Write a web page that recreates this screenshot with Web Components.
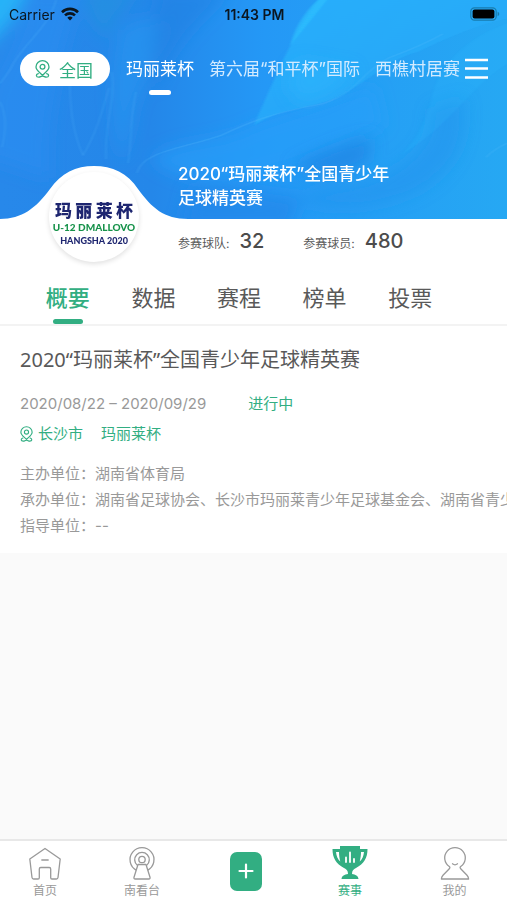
<!doctype html>
<html lang="zh-CN">
  <head>
    <meta charset="UTF-8" />
    <meta name="viewport" content="width=device-width, initial-scale=1" />
    <title>赛事</title>
    <style>
      :root {
        --green: #32ae82;
        --dark: #595959;
        --gray: #999;
      }
      body {
        margin: 0;
        min-height: 100vh;
        display: flex;
        flex-direction: column;
        background: #fafafa;
        color: var(--dark);
        font-family: Inter, "Noto Sans CJK SC", sans-serif;
        overflow-x: hidden;
      }
      tab-bar {
        margin-top: auto;
      }
    </style>
  </head>
  <body>
    <event-hero>
      <status-bar></status-bar>
      <event-switcher>
        <event-link active>玛丽莱杯</event-link>
        <event-link>第六届“和平杯”国际</event-link>
        <event-link>西樵村居赛</event-link>
      </event-switcher>
      <span slot="title">2020“玛丽莱杯”全国青少年足球精英赛</span>
      <hero-stat slot="stats" value="32">参赛球队:</hero-stat>
      <hero-stat slot="stats" value="480">参赛球员:</hero-stat>
    </event-hero>
    <section-tabs>
      <section-tab active>概要</section-tab>
      <section-tab>数据</section-tab>
      <section-tab>赛程</section-tab>
      <section-tab>榜单</section-tab>
      <section-tab>投票</section-tab>
    </section-tabs>
    <event-summary>
      <span slot="title">2020“玛丽莱杯”全国青少年足球精英赛</span>
      <span slot="date">2020/08/22 – 2020/09/29</span>
      <span slot="state">进行中</span>
      <span slot="city">长沙市</span>
      <span slot="cup">玛丽莱杯</span>
      <org-row label="主办单位：">湖南省体育局</org-row>
      <org-row label="承办单位：">湖南省足球协会、长沙市玛丽莱青少年足球基金会、湖南省青少年</org-row>
      <org-row label="指导单位：">--</org-row>
    </event-summary>
    <tab-bar>
      <tab-item icon="home">首页</tab-item>
      <tab-item icon="stand">南看台</tab-item>
      <add-button></add-button>
      <tab-item icon="cup" active>赛事</tab-item>
      <tab-item icon="me">我的</tab-item>
    </tab-bar>

    <script>
      // シャドウルートを作る共通クラス
      class BaseElement extends HTMLElement {
        constructor() {
          super();
          this.attachShadow({ mode: "open" }).innerHTML = this.render();
        }
      }

      const pinIcon = (width, height) => `
        <svg width="${width}" height="${height}" viewBox="0 0 15 18" fill="none" stroke="currentColor" stroke-width="1.3" stroke-linecap="round" aria-hidden="true">
          <path d="M7.5 15.2C4.7 12.4 1 10.2 1 7a6.5 6.3 0 0 1 13 0c0 3.2-3.7 5.4-6.5 8.2z"/>
          <circle cx="7.5" cy="6.8" r="2.4"/>
          <path d="M3.3 13.7c-2.8.9-2.4 3.5.4 3.5 1.9 0 1.9-1 3.8-1s1.9 1 3.8 1c2.8 0 3.2-2.6.4-3.5"/>
        </svg>`;

      class StatusBar extends BaseElement {
        render() {
          return `
            <style>
              :host {
                display: grid;
                grid-template-columns: 1fr auto 1fr;
                align-items: center;
                height: 28px;
                padding: 0 7px 0 9px;
                color: #0b1620;
                font-size: 14px;
              }
              .carrier { display: flex; align-items: center; gap: 6px; }
              .time { font-weight: 600; }
              .battery { justify-self: end; }
              svg { display: block; }
            </style>
            <span class="carrier">Carrier
              <svg width="18" height="14" viewBox="0 0 18 14" fill="none" stroke="currentColor" stroke-width="2.6" aria-hidden="true">
                <path d="M1 5.2a11.4 11.4 0 0 1 16 0"/>
                <path d="M4 8.4a7.2 7.2 0 0 1 10 0"/>
                <path d="M9 13.4 6.3 10.7a3.9 3.9 0 0 1 5.4 0z" fill="currentColor" stroke="none"/>
              </svg>
            </span>
            <span class="time">11:43 PM</span>
            <svg class="battery" width="30" height="14" viewBox="0 0 30 14" aria-hidden="true">
              <rect x=".8" y=".8" width="25.4" height="12.4" rx="3.6" fill="none" stroke="#187cae" stroke-width="1.2"/>
              <rect x="2.6" y="2.5" width="21.8" height="9" rx="2" fill="#000"/>
              <path d="M27.6 4.8c2.2.7 2.2 3.7 0 4.4z" fill="#187cae"/>
            </svg>`;
        }
      }

      class EventLink extends BaseElement {
        render() {
          return `
            <style>
              :host { display: block; flex: none; position: relative; }
              a { color: #d3ebff; font-size: 17px; line-height: 34px; text-decoration: none; white-space: nowrap; }
              :host([active]) a { color: #fff; }
              :host([active])::after {
                content: "";
                position: absolute;
                left: calc(50% - 11px);
                top: 38px;
                width: 22px;
                height: 5px;
                border-radius: 3px;
                background: #fff;
              }
            </style>
            <a href="#"><slot></slot></a>`;
        }
      }

      class EventSwitcher extends BaseElement {
        render() {
          return `
            <style>
              :host { display: flex; align-items: center; padding: 24px 19px 0 20px; }
              button { border: 0; padding: 0; font: inherit; cursor: pointer; }
              .area {
                flex: none;
                display: flex;
                align-items: center;
                gap: 9px;
                height: 34px;
                padding: 0 17px 0 15px;
                border-radius: 17px;
                background: #fff;
                color: var(--green);
                font-size: 17px;
              }
              nav {
                flex: 1;
                min-width: 0;
                display: flex;
                gap: 15px;
                height: 44px;
                margin: 0 4px -10px 16px;
                overflow: hidden;
              }
              .menu { flex: none; background: none; color: #fff; }
              svg { display: block; }
            </style>
            <button class="area">${pinIcon(15, 18)}全国</button>
            <nav><slot></slot></nav>
            <button class="menu" aria-label="菜单">
              <svg width="23" height="22" viewBox="0 0 23 22" stroke="currentColor" stroke-width="2.6">
                <path d="M0 2h23M0 10.5h23M0 19.5h23"/>
              </svg>
            </button>`;
        }
      }

      class HeroStat extends BaseElement {
        render() {
          return `
            <style>
              :host { display: flex; align-items: baseline; gap: 10px; font-size: 12px; line-height: 28px; }
              b { font-size: 20px; font-weight: 500; color: #4c4c4c; }
            </style>
            <span><slot></slot></span><b>${this.getAttribute("value")}</b>`;
        }
      }

      class CupLogo extends BaseElement {
        render() {
          return `
            <style>
              :host {
                display: flex;
                flex-direction: column;
                align-items: center;
                box-sizing: border-box;
                width: 90px;
                height: 90px;
                padding-top: 30px;
                border-radius: 50%;
                background: #fff;
                box-shadow: 0 2px 5px #0000001f;
                color: #1e2670;
                white-space: nowrap;
                font-weight: 900;
              }
              .name { font-size: 17px; line-height: 18px; }
              .team { font: 900 10px/14px Lato, sans-serif; color: #16924a; }
              .city { font: 900 9px/13px Lato, sans-serif; }
            </style>
            <span class="name">玛 丽 莱 杯</span>
            <span class="team">U-12 DMALLOVO</span>
            <span class="city">HANGSHA 2020</span>`;
        }
      }

      class EventHero extends BaseElement {
        render() {
          return `
            <style>
              :host { display: block; background: #fff; }
              .cover { position: relative; isolation: isolate; }
              /* 背景の模様 */
              .art { position: absolute; inset: 0; width: 100%; height: 100%; z-index: -1; }
              .bump { position: absolute; left: 0; bottom: -1px; z-index: -1; }
              cup-logo { position: absolute; left: 49px; bottom: -43px; }
              h1 {
                margin: 76px 0 0 178px;
                max-width: 222px;
                padding-bottom: 9px;
                color: #fff;
                font-size: 17px;
                font-weight: 500;
                line-height: 24px;
              }
              .stats { display: flex; gap: 39px; height: 26px; padding: 8px 0 10px 178px; }
            </style>
            <div class="cover">
              <svg class="art" viewBox="0 0 507 220" preserveAspectRatio="none" aria-hidden="true">
                <defs>
                  <linearGradient id="base" x1="0" y1="0" x2="1" y2="0">
                    <stop offset="0" stop-color="#2788ea"/>
                    <stop offset=".3" stop-color="#2487e9"/>
                    <stop offset=".52" stop-color="#2498f6"/>
                    <stop offset="1" stop-color="#26a8f3"/>
                  </linearGradient>
                  <linearGradient id="petal" x1="0" y1="0" x2="1" y2="1">
                    <stop offset="0" stop-color="#2ab6fe"/>
                    <stop offset="1" stop-color="#25a3f5"/>
                  </linearGradient>
                  <filter id="soft" x="-20%" y="-20%" width="140%" height="140%"><feGaussianBlur stdDeviation="8"/></filter>
                  <filter id="edge" x="-10%" y="-10%" width="120%" height="120%"><feGaussianBlur stdDeviation=".8"/></filter>
                </defs>
                <rect width="507" height="220" fill="url(#base)"/>
                <g filter="url(#soft)">
                  <path d="M-20-20h50C24 8 10 26-20 54z" fill="#28b2f8"/>
                  <path d="M28-10C22 40-4 70-10 100v60l60 20C44 120 60 60 82-10z" fill="#2990f4" opacity=".5"/>
                  <path d="M84-10h60c-20 16-32 26-36 50-12-10-22-28-24-50z" fill="#2495dc" opacity=".5"/>
                  <path d="M120 30c20-16 48-14 48 2-8 28-30 50-36 92l-10 40c-12-40-12-96-2-134z" fill="#2996f2" opacity=".6"/>
                  <path d="M160-10h70c-26 30-56 50-74 100-6-36-4-66 4-100z" fill="#2180e2" opacity=".55"/>
                  <path d="M150 160c30-22 70-14 104-34l120-40 10 40-90 40-60 16c-30 2-60-4-84-22z" fill="#249efa" opacity=".6"/>
                </g>
                <g filter="url(#edge)">
                  <path d="M322-4C300 20 280 66 254 126c30-20 62-16 90-32 32-18 44-34 74-42 34-16 60-28 93-34V-4z" fill="url(#petal)" opacity=".75"/>
                  <path d="M322-4c-12 10-26 26-32 50 14-18 28-34 40-50z" fill="#2dc4ff" opacity=".55"/>
                </g>
                <g filter="url(#soft)">
                  <path d="M372 138c-30 6-60 18-80 30 20 10 50 10 76-6z" fill="#1e7fe0" opacity=".6"/>
                  <path d="M430 110c4 34-22 58-56 70-28 10-60 8-80 20 30 16 100 12 140-18 26-22 34-44 30-84z" fill="#2391ec" opacity=".45"/>
                  <path d="M190 190c40-6 70 6 110 8l-10 32H180z" fill="#2286e8" opacity=".7"/>
                  <path d="M300 60c-20 20-14 36 4 44 20-4 40-14 52-34z" fill="#2cbcff" opacity=".4"/>
                </g>
                <path d="M511 22C474 34 440 60 432 96c-6 24-14 44-32 60 48-26 74-74 111-94z" fill="#2fbcff" opacity=".18" filter="url(#edge)"/>
                <g fill="none" stroke="#62c2ff" stroke-width="1.2" opacity=".28" filter="url(#edge)">
                  <path d="M137 174c4-22 50-26 84-38 30-14 50-22 102-32 34-10 38-32 66-46 22-8 40-16 54-24"/>
                  <path d="M56 0C48 30 20 46 10 70L0 84M70 84c0 30 4 52 13 72 12-20 18-40 26-68M112 72c4 30-8 50-6 88M136 92c-6 24-4 50-8 72"/>
                  <path d="M0 102c7 14 6 28 2 46M486 158c6-6 12-10 21-14"/>
                </g>
              </svg>
              <svg class="bump" width="190" height="55" viewBox="0 0 190 55" fill="#fff" aria-hidden="true">
                <path d="M0 54C22 54 36 43 50 24 61 8 76 1 94 1s34 7 44 23c14 19 26 30 50 30v1H0z"/>
              </svg>
              <slot></slot>
              <h1><slot name="title"></slot></h1>
              <cup-logo></cup-logo>
            </div>
            <div class="stats"><slot name="stats"></slot></div>`;
        }
      }

      class SectionTab extends BaseElement {
        render() {
          return `
            <style>
              :host { display: flex; flex-direction: column; align-items: center; }
              button { border: 0; padding: 0; background: none; color: inherit; font: inherit; font-size: 22px; line-height: 30px; cursor: pointer; }
              :host([active]) { color: var(--green); font-weight: 500; }
              :host([active])::after {
                content: "";
                width: 30px;
                height: 5px;
                margin-top: 6px;
                border-radius: 3px;
                background: var(--green);
              }
            </style>
            <button><slot></slot></button>`;
        }
      }

      class SectionTabs extends BaseElement {
        render() {
          return `
            <style>
              :host {
                display: grid;
                grid-template-columns: repeat(5, 1fr);
                padding: 20px 54px 0 25px;
                border-bottom: 2px solid #f3f3f3;
                background: #fff;
              }
            </style>
            <slot></slot>`;
        }
      }

      class OrgRow extends BaseElement {
        render() {
          return `
            <style>
              :host { display: block; white-space: nowrap; }
            </style>
            <span>${this.getAttribute("label")}</span><slot></slot>`;
        }
      }

      class EventSummary extends BaseElement {
        render() {
          return `
            <style>
              :host {
                display: block;
                padding: 20px 0 14px 20px;
                background: #fff;
                color: var(--gray);
                font-size: 15px;
                line-height: 24px;
                overflow: hidden;
              }
              h2 { margin: 0 0 18px; color: var(--dark); font: 400 20px/28px "Noto Sans", "Noto Sans CJK SC", sans-serif; }
              .row { display: flex; align-items: center; }
              .when { gap: 42px; }
              .where { gap: 18px; margin-top: 6px; }
              .green { color: var(--green); }
              .place { display: flex; align-items: center; gap: 5px; }
              .orgs { margin-top: 15px; line-height: 26px; }
            </style>
            <h2><slot name="title"></slot></h2>
            <div class="row when"><slot name="date"></slot><span class="green"><slot name="state"></slot></span></div>
            <div class="row where green">
              <span class="place">${pinIcon(13, 16)}<slot name="city"></slot></span>
              <slot name="cup"></slot>
            </div>
            <div class="orgs"><slot></slot></div>`;
        }
      }

      const tabIcons = {
        home: `
          <path d="M17 2.5 1.8 13 4 31.5q.2 1.5 1.6 1.5H10q1.3 0 1.3-1.3V23q0-1.5 1.5-1.5h8.4q1.5 0 1.5 1.5v8.7q0 1.3 1.3 1.3h4.4q1.4 0 1.6-1.5L32.2 13z"/>
          <path d="M13.8 14h6.4"/>`,
        stand: `
          <path d="M11.5 24.3a12 12 0 1 1 11 0"/>
          <path d="M12.3 19.3a7.3 7.3 0 1 1 9.4 0"/>
          <circle cx="17" cy="13.5" r="3.2"/>
          <path d="M13 18.5h8l4 12.7q.4 1.8-1.3 1.8H10.3q-1.7 0-1.3-1.8z" fill="#fff"/>`,
        cup: `
          <path d="M7 0h20v3h7.5c0 9-3.5 14.5-11.5 19-2.6 1.4-4 2.5-4 6 3.5.5 6 1.6 6.5 5h-17c.5-3.4 3-4.5 6.5-5 0-3.5-1.4-4.6-4-6C3 17.5-.5 12-.5 3H7z" fill="currentColor" stroke="none"/>
          <path d="M3 6h3c0 3 .5 6.5 1.3 9.6C4.8 13.3 3.3 10 3 6zM31 6h-3c0 3-.5 6.5-1.3 9.6 2.5-2.3 4-5.6 4.3-9.6z" fill="#fff" stroke="none"/>
          <path d="M13 16v-4.5M17 16V6.5M21 16v-3" stroke="#fff" stroke-width="1.8"/>`,
        me: `
          <path d="M11.3 20.5a10.3 10.3 0 1 1 11.4 0q-1.2 1 0 2.2l6.3 6.5q1.5 1.7 1.6 3.8H3.4q.1-2.1 1.6-3.8l6.3-6.5q1.2-1.2 0-2.2z"/>
          <path d="M14.5 17.8q2.5 2 5 0"/>`,
      };

      class TabItem extends BaseElement {
        render() {
          return `
            <style>
              :host { display: flex; justify-content: center; color: var(--gray); }
              :host([active]) { color: var(--green); }
              a { display: flex; flex-direction: column; align-items: center; padding-top: 5px; color: inherit; font-size: 12px; line-height: 20px; text-decoration: none; }
              svg { display: block; overflow: visible; }
            </style>
            <a href="#">
              <svg width="34" height="35" viewBox="0 0 34 35" fill="none" stroke="currentColor" stroke-width="1.3" stroke-linecap="round" stroke-linejoin="round" aria-hidden="true">${tabIcons[this.getAttribute("icon")]}</svg>
              <slot></slot>
            </a>`;
        }
      }

      class AddButton extends BaseElement {
        render() {
          return `
            <style>
              :host { display: flex; justify-content: center; align-items: center; }
              button { width: 32px; height: 39px; padding: 0; border: 0; border-radius: 7px; background: var(--green); color: #fff; cursor: pointer; }
              svg { display: block; margin: auto; }
            </style>
            <button aria-label="发布">
              <svg width="16" height="16" viewBox="0 0 16 16" stroke="currentColor" stroke-width="2.2" stroke-linecap="round"><path d="M8 1.5v13M1.5 8h13"/></svg>
            </button>`;
        }
      }

      class TabBar extends BaseElement {
        render() {
          return `
            <style>
              :host {
                display: grid;
                grid-template-columns: 90fr 104fr 104fr 104fr 105fr;
                height: 59px;
                border-top: 2px solid #e8e8e8;
                background: #fff;
              }
            </style>
            <slot></slot>`;
        }
      }

      customElements.define("status-bar", StatusBar);
      customElements.define("event-link", EventLink);
      customElements.define("event-switcher", EventSwitcher);
      customElements.define("hero-stat", HeroStat);
      customElements.define("cup-logo", CupLogo);
      customElements.define("event-hero", EventHero);
      customElements.define("section-tab", SectionTab);
      customElements.define("section-tabs", SectionTabs);
      customElements.define("org-row", OrgRow);
      customElements.define("event-summary", EventSummary);
      customElements.define("tab-item", TabItem);
      customElements.define("add-button", AddButton);
      customElements.define("tab-bar", TabBar);
    </script>
  </body>
</html>
